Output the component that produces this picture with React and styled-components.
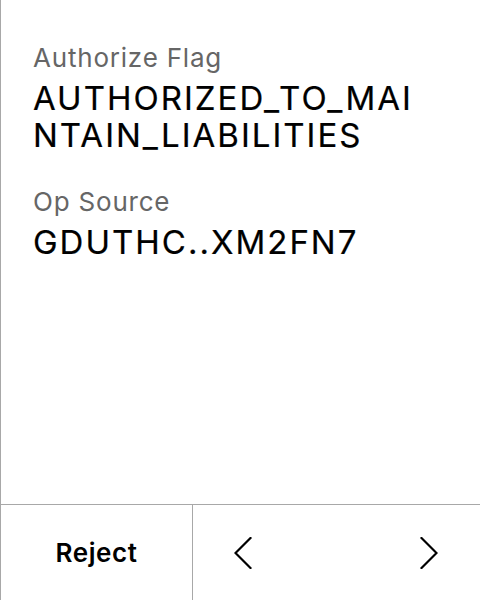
import styled, { createGlobalStyle } from 'styled-components';

const GlobalStyle = createGlobalStyle`
  html, body {
    margin: 0;
    padding: 0;
    background: #ffffff;
  }
  body {
    font-family: Inter, 'Noto Sans', sans-serif;
  }
`;

const Screen = styled.div`
  display: flex;
  flex-direction: column;
  width: 480px;
  height: 600px;
  box-sizing: border-box;
  border-left: 1px solid #a8a8a8;
  background: #ffffff;
  overflow: hidden;
`;

const Content = styled.div`
  flex: 1;
  display: flex;
  flex-direction: column;
  gap: 31px;
  padding: 41px 52px 0 32px;
`;

const Field = styled.div`
  display: flex;
  flex-direction: column;
`;

const Label = styled.div`
  color: #666666;
  font-size: 26px;
  line-height: 34px;
  letter-spacing: 0.8px;
`;

const Value = styled.div`
  color: #000000;
  font-size: 33px;
  line-height: 37px;
  letter-spacing: 2px;
  margin-top: 5px;
  word-break: break-all;
  -webkit-text-stroke: 0.2px #000;
`;

const Footer = styled.div`
  display: flex;
  height: 96px;
  box-sizing: border-box;
  border-top: 1px solid #a8a8a8;
`;

const RejectButton = styled.button`
  width: 192px;
  border: none;
  border-right: 1px solid #a8a8a8;
  background: transparent;
  font-family: Inter, sans-serif;
  font-weight: 600;
  font-size: 26px;
  letter-spacing: 0.6px;
  color: #000000;
  padding: 0;
`;

const Nav = styled.div`
  flex: 1;
  display: flex;
  align-items: center;
  justify-content: space-between;
  padding: 0 39px 0 38px;
`;

const NavButton = styled.button`
  width: 24px;
  height: 40px;
  display: flex;
  align-items: center;
  justify-content: center;
  border: none;
  background: transparent;
  padding: 0;
`;

const Chevron = ({ dir }) => (
  <svg width="18" height="32" viewBox="0 0 18 32" fill="none">
    <path
      d={dir === 'left' ? 'M16.5 1 L1.5 16 L16.5 31' : 'M1.5 1 L16.5 16 L1.5 31'}
      stroke="#000"
      strokeWidth="2.2"
      strokeLinecap="square"
    />
  </svg>
);

export default function App() {
  return (
    <>
      <GlobalStyle />
      <Screen>
        <Content>
          <Field>
            <Label>Authorize Flag</Label>
            <Value>AUTHORIZED_TO_MAINTAIN_LIABILITIES</Value>
          </Field>
          <Field>
            <Label>Op Source</Label>
            <Value>GDUTHC..XM2FN7</Value>
          </Field>
        </Content>
        <Footer>
          <RejectButton>Reject</RejectButton>
          <Nav>
            <NavButton>
              <Chevron dir="left" />
            </NavButton>
            <NavButton>
              <Chevron dir="right" />
            </NavButton>
          </Nav>
        </Footer>
      </Screen>
    </>
  );
}
